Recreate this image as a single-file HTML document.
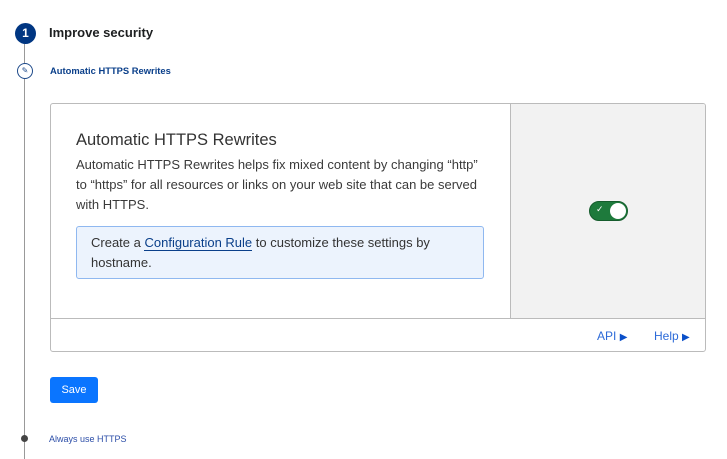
<!DOCTYPE html>
<html><head><style>
*{margin:0;padding:0;box-sizing:border-box}
body{width:727px;height:459px;background:#fff;font-family:"Liberation Sans",sans-serif;position:relative;overflow:hidden;color:#222}
.a{position:absolute}
</style></head><body>
<div class="a" style="left:24px;top:40px;width:1px;height:419px;background:#999"></div>
<div class="a" style="left:15px;top:23px;width:21px;height:21px;border-radius:50%;background:#003682;color:#fff;font-size:12px;font-weight:bold;text-align:center;line-height:21px">1</div>
<div class="a" style="left:49px;top:25px;font-size:13px;font-weight:bold;color:#1d1f20">Improve security</div>
<div class="a" style="left:17px;top:63px;width:16px;height:16px;border-radius:50%;border:1px solid #1e4a8a;background:#fff;font-size:8px;color:#1e4a8a;text-align:center;line-height:14px">✎</div>
<div class="a" style="left:50px;top:65px;font-size:9.4px;font-weight:bold;color:#0a3f8a">Automatic HTTPS Rewrites</div>
<div class="a" style="left:50px;top:103px;width:656px;height:249px;border:1px solid #bbb;border-radius:3px;overflow:hidden">
 <div class="a" style="left:459px;top:0;width:196px;height:214px;background:#f2f2f2;border-left:1px solid #bbb"></div>
 <div class="a" style="left:0;top:214px;width:656px;height:1px;background:#bbb"></div>
 <div class="a" style="left:25px;top:27px;font-size:16.5px;color:#333">Automatic HTTPS Rewrites</div>
 <div class="a" style="left:25px;top:51px;white-space:nowrap;font-size:13px;line-height:20px;color:#3a3a3a">Automatic HTTPS Rewrites helps fix mixed content by changing “http”<br>to “https” for all resources or links on your web site that can be served<br>with HTTPS.</div>
 <div class="a" style="left:25px;top:122px;width:408px;height:53px;border:1px solid #8fb8f0;border-radius:3px;background:#ecf3fd;padding:6px 14px;font-size:13px;line-height:20px;color:#333">Create a <span style="color:#0a3f8a;border-bottom:1px solid #0a3f8a">Configuration Rule</span> to customize these settings by hostname.</div>
 <div class="a" style="left:538px;top:97px;width:39px;height:20px;border-radius:10px;background:#1e7a3c;border:1px solid #155c2c"><span class="a" style="left:6px;top:2px;color:#fff;font-size:9px">✓</span><span class="a" style="right:1px;top:1px;width:16px;height:16px;border-radius:50%;background:#fff"></span></div>
 <div class="a" style="left:546px;top:225px;font-size:12px;color:#2c6ad8">API <span style="font-size:10px;color:#0a4fc9">▶</span></div>
 <div class="a" style="left:603px;top:225px;font-size:12px;color:#2c6ad8">Help <span style="font-size:10px;color:#0a4fc9">▶</span></div>
</div>
<div class="a" style="left:50px;top:377px;width:48px;height:26px;background:#0a75ff;border-radius:3px;color:#fff;font-size:11px;text-align:center;line-height:26px">Save</div>
<div class="a" style="left:21px;top:435px;width:7px;height:7px;border-radius:50%;background:#444"></div>
<div class="a" style="left:49px;top:434px;font-size:9px;color:#2c4ea8">Always use HTTPS</div>
</body></html>
